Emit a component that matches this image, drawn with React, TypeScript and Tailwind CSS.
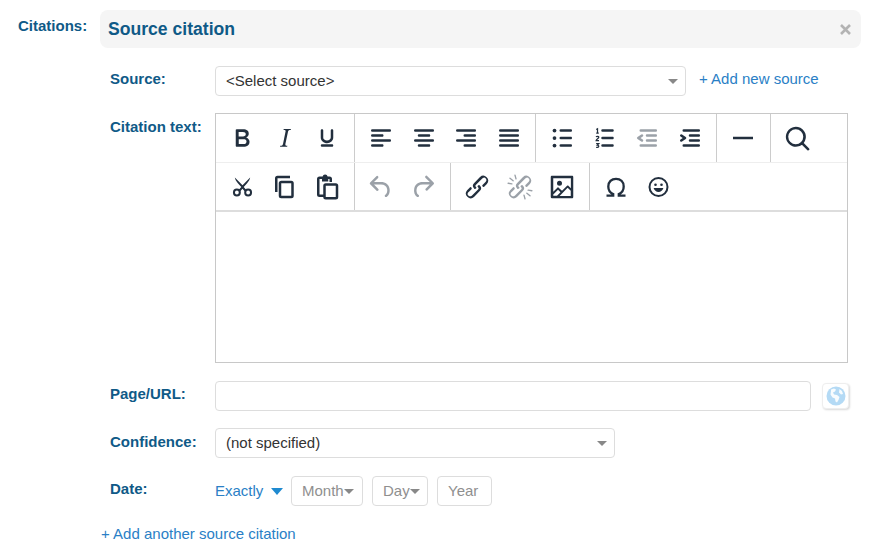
import React from "react";

const DARK = "#222f3e";
const MUTED = "#9ba1a8";

function Ico({ d, c = DARK, s = 30, children }: { d?: string; c?: string; s?: number; children?: React.ReactNode }) {
  return (
    <svg width={s} height={s} viewBox="0 0 24 24" fill={c} fillRule="evenodd">
      {d ? <path d={d} /> : null}
      {children}
    </svg>
  );
}

const icons: Record<string, React.ReactNode> = {
  bold: <Ico d="M7.8 19c-.3 0-.5 0-.6-.2l-.2-.5V5.7c0-.2 0-.4.2-.5l.6-.2h5c1.5 0 2.7.3 3.5 1 .7.6 1.1 1.4 1.1 2.5a3 3 0 0 1-.6 1.9c-.4.6-1 1-1.6 1.2.4.1.9.3 1.3.6s.8.7 1 1.2c.4.4.5 1 .5 1.6 0 1.3-.4 2.3-1.3 3-.8.7-2.1 1-3.8 1H7.8zm5-8.3c.6 0 1.2-.1 1.6-.5.4-.3.6-.7.6-1.3 0-1.1-.8-1.7-2.3-1.7H9.3v3.5h3.4zm.5 6c.7 0 1.3-.1 1.7-.4.4-.4.6-.9.6-1.5s-.2-1-.7-1.4c-.4-.3-1-.4-2-.4H9.4v3.8h4z" />,
  italic: <Ico d="m16.7 4.7-.1.9h-.3c-.6 0-1 0-1.4.3-.3.3-.4.6-.5 1.1l-2.1 9.8v.6c0 .5.4.8 1.4.8h.2l-.2.8H8l.2-.8h.2c1.1 0 1.8-.5 2-1.5l2-9.8.1-.5c0-.6-.4-.8-1.4-.8h-.3l.2-.9h5.8Z" />,
  underline: <Ico d="M16 5c.6 0 1 .4 1 1v5.5a4 4 0 0 1-.4 1.8l-1 1.4a5.3 5.3 0 0 1-5.5 1 5 5 0 0 1-1.6-1c-.5-.4-.8-.9-1.1-1.4a4 4 0 0 1-.4-1.8V6c0-.6.4-1 1-1s1 .4 1 1v5.5c0 .3 0 .6.2 1l.6.7a3.3 3.3 0 0 0 2.2.8 3.4 3.4 0 0 0 2.2-.8c.3-.2.4-.5.6-.8l.2-.9V6c0-.6.4-1 1-1ZM8 17h8c.6 0 1 .4 1 1s-.4 1-1 1H8a1 1 0 0 1 0-2Z" />,
  left: <Ico d="M5 5h14c.6 0 1 .4 1 1s-.4 1-1 1H5a1 1 0 1 1 0-2zm0 4h8c.6 0 1 .4 1 1s-.4 1-1 1H5a1 1 0 1 1 0-2zm0 8h8c.6 0 1 .4 1 1s-.4 1-1 1H5a1 1 0 0 1 0-2zm0-4h14c.6 0 1 .4 1 1s-.4 1-1 1H5a1 1 0 0 1 0-2z" />,
  center: <Ico d="M5 5h14c.6 0 1 .4 1 1s-.4 1-1 1H5a1 1 0 1 1 0-2zm3 4h8c.6 0 1 .4 1 1s-.4 1-1 1H8a1 1 0 1 1 0-2zm0 8h8c.6 0 1 .4 1 1s-.4 1-1 1H8a1 1 0 0 1 0-2zm-3-4h14c.6 0 1 .4 1 1s-.4 1-1 1H5a1 1 0 0 1 0-2z" />,
  right: <Ico d="M5 5h14c.6 0 1 .4 1 1s-.4 1-1 1H5a1 1 0 1 1 0-2zm6 4h8c.6 0 1 .4 1 1s-.4 1-1 1h-8a1 1 0 0 1 0-2zm0 8h8c.6 0 1 .4 1 1s-.4 1-1 1h-8a1 1 0 0 1 0-2zm-6-4h14c.6 0 1 .4 1 1s-.4 1-1 1H5a1 1 0 0 1 0-2z" />,
  justify: <Ico d="M5 5h14c.6 0 1 .4 1 1s-.4 1-1 1H5a1 1 0 1 1 0-2zm0 4h14c.6 0 1 .4 1 1s-.4 1-1 1H5a1 1 0 1 1 0-2zm0 4h14c.6 0 1 .4 1 1s-.4 1-1 1H5a1 1 0 0 1 0-2zm0 4h14c.6 0 1 .4 1 1s-.4 1-1 1H5a1 1 0 0 1 0-2z" />,
  bullets: (
    <Ico d="M11 5h8c.6 0 1 .4 1 1s-.4 1-1 1h-8a1 1 0 0 1 0-2zm0 6h8c.6 0 1 .4 1 1s-.4 1-1 1h-8a1 1 0 0 1 0-2zm0 6h8c.6 0 1 .4 1 1s-.4 1-1 1h-8a1 1 0 0 1 0-2z">
      <circle cx="6" cy="6" r="1.5" />
      <circle cx="6" cy="12" r="1.5" />
      <circle cx="6" cy="18" r="1.5" />
    </Ico>
  ),
  numbers: (
    <Ico d="M10 17h8c.6 0 1 .4 1 1s-.4 1-1 1h-8a1 1 0 0 1 0-2zm0-6h8c.6 0 1 .4 1 1s-.4 1-1 1h-8a1 1 0 0 1 0-2zm0-6h8c.6 0 1 .4 1 1s-.4 1-1 1h-8a1 1 0 1 1 0-2z">
      <g fill="none" stroke={DARK} strokeWidth="1">
        <path d="M5 5.2 6 4.6V8M5 8h2" />
        <path d="M4.900 11.200c.3-.8 2.200-.8 2.100.2 0 .9-2 1.400-2.100 2.600H7.200" />
        <path d="M4.900 16.500H7l-1.100 1.200c1.700 0 1.500 2.300-1 1.700" />
      </g>
    </Ico>
  ),
  outdent: <Ico c={MUTED} d="M7 5h12c.6 0 1 .4 1 1s-.4 1-1 1H7a1 1 0 1 1 0-2zm5 4h7c.6 0 1 .4 1 1s-.4 1-1 1h-7a1 1 0 0 1 0-2zm0 4h7c.6 0 1 .4 1 1s-.4 1-1 1h-7a1 1 0 0 1 0-2zm-5 4h12a1 1 0 0 1 0 2H7a1 1 0 0 1 0-2zm1.600-3.800a1 1 0 0 1-1.200 1.600l-3-2a1 1 0 0 1 0-1.600l3-2a1 1 0 0 1 1.200 1.600L6.800 12l1.800 1.200z" />,
  indent: <Ico d="M7 5h12c.6 0 1 .4 1 1s-.4 1-1 1H7a1 1 0 1 1 0-2zm5 4h7c.6 0 1 .4 1 1s-.4 1-1 1h-7a1 1 0 0 1 0-2zm0 4h7c.6 0 1 .4 1 1s-.4 1-1 1h-7a1 1 0 0 1 0-2zm-5 4h12a1 1 0 0 1 0 2H7a1 1 0 0 1 0-2zm-2.600-3.800L6.200 12l-1.800-1.200a1 1 0 0 1 1.200-1.600l3 2a1 1 0 0 1 0 1.600l-3 2a1 1 0 1 1-1.200-1.600z" />,
  hr: <Ico d="M4 11h16v2H4z" />,
  search: <Ico d="M16 17.300a8 8 0 1 1 1.400-1.400l4.300 4.400a1 1 0 0 1-1.400 1.400l-4.400-4.400Zm-5-.3a6 6 0 1 0 0-12 6 6 0 0 0 0 12Z" />,
  cut: (
    <Ico s={27}>
      <g fill="none" stroke={DARK}>
        <circle cx="7" cy="17.300" r="2.600" strokeWidth="1.800" />
        <circle cx="17" cy="17.300" r="2.600" strokeWidth="1.800" />
      </g>
      <path d="M5.200 4c.3 2 1.300 3.400 2.700 5l3 3.400-2.400 2.700 1.500 1.200L12 14l1.900 2.300 1.500-1.200-2.300-2.700 3-3.400c1.400-1.600 2.400-3 2.700-5L12 10.800 5.200 4Z" />
    </Ico>
  ),
  copy: <Ico d="M16 3H6a2 2 0 0 0-2 2v11h2V5h10V3Zm1 4a2 2 0 0 1 2 2v10a2 2 0 0 1-2 2H9a2 2 0 0 1-2-2V9c0-1.100.9-2 2-2h8Zm0 2H9v10h8V9Z" />,
  paste: <Ico d="M10.500 2a2 2 0 0 1 2 1.500H14a2 2 0 0 1 2 2V8h-2V5.500h-1v2H8v-2H6V18h3v2H6a2 2 0 0 1-2-2V5.500a2 2 0 0 1 2-2h2.500a2 2 0 0 1 2-1.500ZM19 9a2 2 0 0 1 2 2v9a2 2 0 0 1-2 2h-8a2 2 0 0 1-2-2v-9a2 2 0 0 1 2-2h8Zm0 2h-8v9h8v-9Z" />,
  undo: <Ico c={MUTED} d="M6.400 8H12c3.700 0 6.200 2 6.800 5.100.6 2.700-.4 5.600-2.300 6.800a1 1 0 0 1-1-1.800c1.100-.6 1.800-2.700 1.400-4.600-.5-2.100-2.100-3.500-4.900-3.500H6.400l3.300 3.300a1 1 0 1 1-1.400 1.400l-5-5a1 1 0 0 1 0-1.400l5-5a1 1 0 0 1 1.400 1.400L6.400 8Z" />,
  redo: (
    <Ico c={MUTED}>
      <path transform="translate(-1 0)" d="M17.600 10H12c-2.800 0-4.400 1.400-4.900 3.500-.4 2 .3 4 1.400 4.600a1 1 0 1 1-1 1.800c-2-1.200-2.900-4.100-2.300-6.800.6-3 3-5.100 6.800-5.100h5.600l-3.300-3.300a1 1 0 1 1 1.400-1.400l5 5a1 1 0 0 1 0 1.400l-5 5a1 1 0 0 1-1.400-1.400l3.300-3.300Z" />
    </Ico>
  ),
  link: <Ico d="M6.200 12.300a1 1 0 0 1 1.400 1.400l-2 2a2 2 0 1 0 2.600 2.800l4.800-4.800a1 1 0 0 0 0-1.400 1 1 0 1 1 1.400-1.300 2.900 2.900 0 0 1 0 4L9.600 20a3.900 3.900 0 0 1-5.500-5.500l2-2Zm11.600-.6a1 1 0 0 1-1.400-1.400l2-2a2 2 0 1 0-2.600-2.800L11 10.300a1 1 0 0 0 0 1.400A1 1 0 1 1 9.600 13a2.900 2.900 0 0 1 0-4L14.400 4a3.900 3.900 0 0 1 5.500 5.500l-2 2Z" />,
  unlink: (
    <Ico c={MUTED} d="M6.200 12.300a1 1 0 0 1 1.400 1.400l-2 2a2 2 0 1 0 2.600 2.800l4.800-4.800a1 1 0 0 0 0-1.400 1 1 0 1 1 1.400-1.300 2.900 2.900 0 0 1 0 4L9.600 20a3.900 3.900 0 0 1-5.500-5.500l2-2Zm11.600-.6a1 1 0 0 1-1.400-1.400l2-2a2 2 0 1 0-2.600-2.800L11 10.300a1 1 0 0 0 0 1.400A1 1 0 1 1 9.600 13a2.900 2.900 0 0 1 0-4L14.400 4a3.900 3.900 0 0 1 5.500 5.500l-2 2Z">
      <g stroke={MUTED} strokeWidth="1.100" strokeLinecap="round">
        <path d="M4 5l2.500 2M8 2.500l.8 3M2.500 9l3 .5M20 19l-2.500-2M16 21.500l-.8-3M21.500 15l-3-.5" />
      </g>
    </Ico>
  ),
  image: <Ico d="M5 15.700l3.300-3.200c.3-.3.700-.3 1 0L12 15l4.100-4c.3-.4.8-.4 1 0l2 1.900V5H5v10.700zM5 18v1h3l2.800-2.900-2-2L5 17.900zm14-3l-2.500-2.400-6.400 6.500H19v-4zM4 3h16c.6 0 1 .4 1 1v16c0 .6-.4 1-1 1H4a1 1 0 0 1-1-1V4c0-.6.4-1 1-1zm6 8a2 2 0 1 0 0-4 2 2 0 0 0 0 4z" />,
  omega: (
    <svg width="24" height="24" viewBox="0 0 24 24" fill="none" stroke={DARK} strokeWidth="2.300">
      <path d="M2.500 20.700H9.200v-1.600C6 17.800 4.300 15 4.300 11.500 4.300 6.800 7.500 3.800 12 3.800s7.700 3 7.700 7.700c0 3.500-1.700 6.300-4.900 7.600v1.600h6.700" />
    </svg>
  ),
  emoji: (
    <Ico s={24}>
      <circle cx="11.500" cy="12" r="9" fill="none" stroke={DARK} strokeWidth="2" />
      <circle cx="8.500" cy="9.700" r="1.300" />
      <circle cx="14.500" cy="9.700" r="1.300" />
      <path d="M6.600 13h9.800c-.5 2.300-2.600 4-4.900 4s-4.400-1.700-4.900-4Z" />
    </Ico>
  ),
};

function Group({ items, w, last }: { items: string[]; w: string; last?: boolean }) {
  return (
    <div className={`flex items-center pl-[5px] ${w} ${last ? "" : "border-r border-[#cccccc]"}`}>
      {items.map((k) => (
        <div key={k} className="flex w-[42.5px] h-[48px] items-center justify-center shrink-0">
          {icons[k]}
        </div>
      ))}
    </div>
  );
}

function Caret({ className }: { className: string }) {
  return <span className={`inline-block border-x-[5px] border-x-transparent border-t-[5px] ${className}`} />;
}

function Select({ text, w }: { text: string; w: string }) {
  return (
    <div className={`flex items-center justify-between h-[30px] ${w} pl-[10px] pr-[7px] border border-[#dddddd] rounded text-[15px] text-[#333333] bg-white`}>
      <span>{text}</span>
      <Caret className="border-t-[#888888]" />
    </div>
  );
}

function Label({ children, low }: { children: React.ReactNode; low?: boolean }) {
  return (
    <div className={`w-[105px] shrink-0 ${low ? "pt-[6px]" : "pt-[5px]"} leading-[16px] text-[15px] font-bold text-[#0f5a87]`}>
      {children}
    </div>
  );
}

function DatePill({ w, text, caret }: { w: string; text: string; caret?: boolean }) {
  return (
    <div className={`flex items-center h-[30px] ${w} pl-[10px] border border-[#dddddd] rounded text-[15px] text-[#8f8f8f]`}>
      <span>{text}</span>
      {caret ? <Caret className="border-t-[#888888]" /> : null}
    </div>
  );
}

export default function App() {
  return (
    <div className="w-[882px] h-[557px] bg-white overflow-hidden font-['Liberation_Sans',Arial,sans-serif]">
      <div className="flex pt-[10px] pl-[18px]">
        <div className="w-[82px] shrink-0 pt-[8px] leading-[16px] text-[15px] font-bold text-[#0f5a87]">Citations:</div>
        <div className="flex items-center justify-between w-[761px] h-[38px] pl-[8px] pr-[10px] rounded-lg bg-[#f5f5f5]">
          <span className="text-[17.6px] font-bold text-[#0f5a87]">Source citation</span>
          <svg width="11" height="11" viewBox="0 0 11 11" stroke="#b3b3b3" strokeWidth="2.600">
            <path d="M1 1l9 9M10 1l-9 9" />
          </svg>
        </div>
      </div>

      <div className="pl-[110px]">
        <div className="flex mt-[18px]">
          <Label>Source:</Label>
          <Select text="<Select source>" w="w-[471px]" />
          <a className="ml-[13px] mt-[4px] leading-[17px] text-[15px] text-[#2a7fc6]">+ Add new source</a>
        </div>

        <div className="flex mt-[17px]">
          <Label low>Citation text:</Label>
          <div className="w-[633px] h-[250px] border border-[#c8c8c8]">
            <div className="flex h-[49px] border-b border-[#eeeeee]">
              <Group items={["bold", "italic", "underline"]} w="w-[139px]" />
              <Group items={["left", "center", "right", "justify"]} w="w-[181px]" />
              <Group items={["bullets", "numbers", "outdent", "indent"]} w="w-[181px]" />
              <Group items={["hr"]} w="w-[54px]" />
              <Group items={["search"]} w="w-[60px]" last />
            </div>
            <div className="flex h-[49px] border-b-2 border-[#dddddd]">
              <Group items={["cut", "copy", "paste"]} w="w-[139px]" />
              <Group items={["undo", "redo"]} w="w-[96px]" />
              <Group items={["link", "unlink", "image"]} w="w-[139px]" />
              <Group items={["omega", "emoji"]} w="w-[96px]" last />
            </div>
          </div>
        </div>

        <div className="flex mt-[18px]">
          <Label>Page/URL:</Label>
          <div className="w-[596px] h-[30px] border border-[#dddddd] rounded bg-white" />
          <div className="ml-[11px] mt-[2px] flex w-[27px] h-[26px] items-center justify-center rounded bg-white border border-[#eeeeee] shadow-[1px_1px_2px_rgba(0,0,0,0.15)]">
            <svg width="20" height="20" viewBox="0 0 20 20">
              <circle cx="10" cy="10" r="9.500" fill="#b4daf5" />
              <path d="M5 3.500l3-1 2 1-1 2-2 1 1 2 3 .5 2.500 2-1 3-1.500 2.500-1.500-1-.5-3-2.500-1-2-3 .5-3.500Z M13.500 3l2.500 2 1 3-2 .5-2-2Z" fill="#ffffff" opacity="0.9" />
            </svg>
          </div>
        </div>

        <div className="flex mt-[17px]">
          <Label low>Confidence:</Label>
          <Select text="(not specified)" w="w-[400px]" />
        </div>

        <div className="flex mt-[18px]">
          <Label>Date:</Label>
          <div className="flex items-center h-[30px] w-[76px] text-[15px] text-[#2a7fc6] gap-[8px]">
            <span>Exactly</span>
            <span className="inline-block border-x-[6.5px] border-x-transparent border-t-[7px] border-t-[#1f8ad0]" />
          </div>
          <DatePill w="w-[72px]" text="Month" caret />
          <div className="w-[9px]" />
          <DatePill w="w-[56px]" text="Day" caret />
          <div className="w-[9px]" />
          <DatePill w="w-[55px]" text="Year" />
        </div>
      </div>

      <div className="pl-[101px] mt-[19px] text-[15px] leading-[17px] text-[#2a7fc6]">+ Add another source citation</div>
    </div>
  );
}
